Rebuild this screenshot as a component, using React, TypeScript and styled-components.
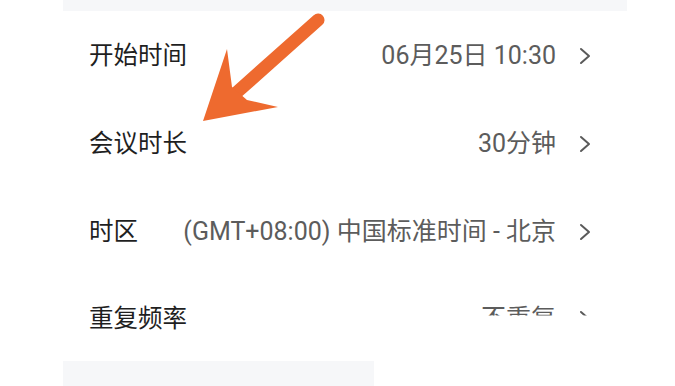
import React from "react";
import styled, { createGlobalStyle } from "styled-components";

const Global = createGlobalStyle`
  html, body { margin: 0; padding: 0; background: #ffffff; }
  body { font-family: Roboto, "Noto Sans CJK SC", sans-serif; }
`;

const Page = styled.div`
  position: relative;
  width: 675px;
  height: 386px;
  overflow: hidden;
  background: #ffffff;
  display: flex;
  flex-direction: column;
`;

const Band = styled.div<{ $w: number; $h: number }>`
  margin-left: 63px;
  width: ${(p) => p.$w}px;
  height: ${(p) => p.$h}px;
  background: #f6f7f9;
  flex-shrink: 0;
`;

const List = styled.div`
  display: flex;
  flex-direction: column;
  flex: 1;
`;

const Row = styled.div<{ $h: number }>`
  height: ${(p) => p.$h}px;
  display: flex;
  align-items: center;
  padding: 0 83px 0 89px;
  font-size: 25px;
  line-height: 34px;
`;

const Label = styled.div`
  color: #1f1f1f;
  white-space: nowrap;
  font-size: 24.5px;
`;

const Right = styled.div<{ $clipped?: boolean }>`
  margin-left: auto;
  display: flex;
  align-items: center;
  gap: 22px;
  ${(p) => (p.$clipped ? "clip-path: inset(0 0 20px 0);" : "")}
`;

const Value = styled.div`
  color: #5c5c5c;
  white-space: nowrap;
`;

const Chevron = styled.svg`
  width: 14px;
  height: 18px;
  display: block;
`;

const Arrow = styled.svg`
  position: absolute;
  left: 0;
  top: 0;
  width: 675px;
  height: 386px;
  pointer-events: none;
`;

const rows = [
  { label: "开始时间", value: "06月25日 10:30", h: 89 },
  { label: "会议时长", value: "30分钟", h: 88 },
  { label: "时区", value: "(GMT+08:00) 中国标准时间 - 北京", h: 88 },
  { label: "重复频率", value: "不重复", h: 85, clipped: true },
];

export default function App() {
  return (
    <>
      <Global />
      <Page>
        <Band $w={564} $h={11} />
        <List>
          {rows.map((r) => (
            <Row key={r.label} $h={r.h}>
              <Label>{r.label}</Label>
              <Right $clipped={r.clipped}>
                <Value>{r.value}</Value>
                <Chevron viewBox="0 0 14 18">
                  <path d="M3 2 L11 9 L3 16" fill="none" stroke="#5a5a5a" strokeWidth="2" strokeLinecap="round" strokeLinejoin="round" />
                </Chevron>
              </Right>
            </Row>
          ))}
        </List>
        <Band $w={311} $h={25} />
        <Arrow viewBox="0 0 675 386">
          <line x1="318" y1="20" x2="236" y2="93" stroke="#ee6a2f" strokeWidth="13" strokeLinecap="round" />
          <polygon points="203,121 227,49 232,87 247,100 278,107" fill="#ee6a2f" />
        </Arrow>
      </Page>
    </>
  );
}
